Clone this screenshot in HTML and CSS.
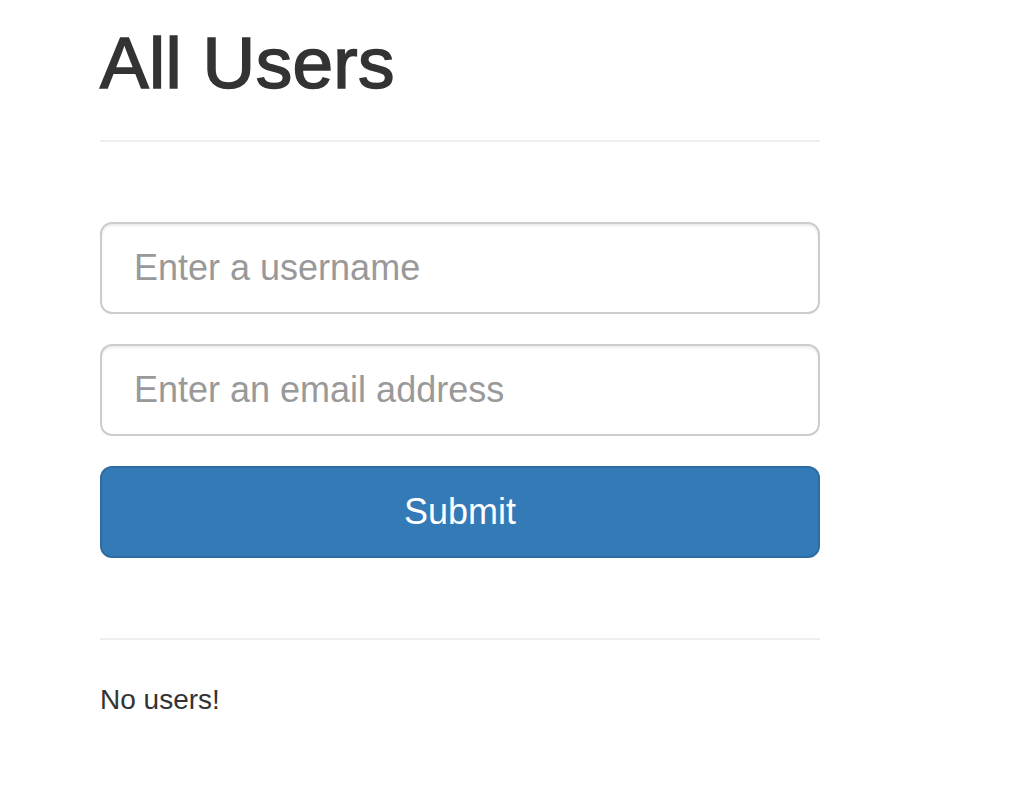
FILE: index.html
```html
<!DOCTYPE html>
<html lang="en">
<head>
<meta charset="utf-8">
<title>All Users</title>
<link rel="stylesheet" href="styles.css">
</head>
<body>
<div class="container">
  <h1 class="title">All Users</h1>
  <hr class="rule">
  <form class="user-form">
    <input class="field" type="text" placeholder="Enter a username">
    <input class="field" type="email" placeholder="Enter an email address">
    <button class="submit" type="button">Submit</button>
  </form>
  <hr class="rule rule-bottom">
  <p class="empty">No users!</p>
</div>
</body>
</html>
```
FILE: styles.css
```css
html, body {
  margin: 0;
  padding: 0;
  background: #fff;
}
body {
  font-family: "Liberation Sans", Arial, Helvetica, sans-serif;
  color: #333;
}
.container {
  width: 720px;
  margin-left: 100px;
}
.title {
  margin: 23px 0 0;
  font-size: 73px;
  line-height: 80px;
  font-weight: 400;
  letter-spacing: 0.3px;
  color: #333;
  -webkit-text-stroke: 1.6px #333;
}
.rule {
  margin: 37px 0 0;
  border: 0;
  border-top: 2px solid #eee;
  height: 0;
}
.user-form {
  margin-top: 80px;
  display: flex;
  flex-direction: column;
  gap: 30px;
}
.field {
  box-sizing: border-box;
  display: block;
  width: 720px;
  height: 92px;
  margin: 0;
  padding: 0 32px 1px;
  border: 2px solid #ccc;
  border-radius: 12px;
  box-shadow: inset 0 2px 2px rgba(0, 0, 0, 0.075);
  font-family: "Liberation Sans", Arial, Helvetica, sans-serif;
  font-size: 36px;
  line-height: normal;
  color: #555;
  background: #fff;
  outline: none;
}
.field::placeholder {
  color: #999;
  opacity: 1;
}
.submit {
  box-sizing: border-box;
  display: block;
  width: 720px;
  height: 92px;
  margin: 0;
  padding: 0 0 1px;
  border: 2px solid #2e6da4;
  border-radius: 12px;
  background: #337ab7;
  color: #fff;
  font-family: "Liberation Sans", Arial, Helvetica, sans-serif;
  font-size: 36px;
  line-height: normal;
  cursor: pointer;
}
.rule-bottom {
  margin-top: 80px;
}
.empty {
  margin: 40px 0 0;
  font-size: 28px;
  line-height: 40px;
  color: #333;
}
```
